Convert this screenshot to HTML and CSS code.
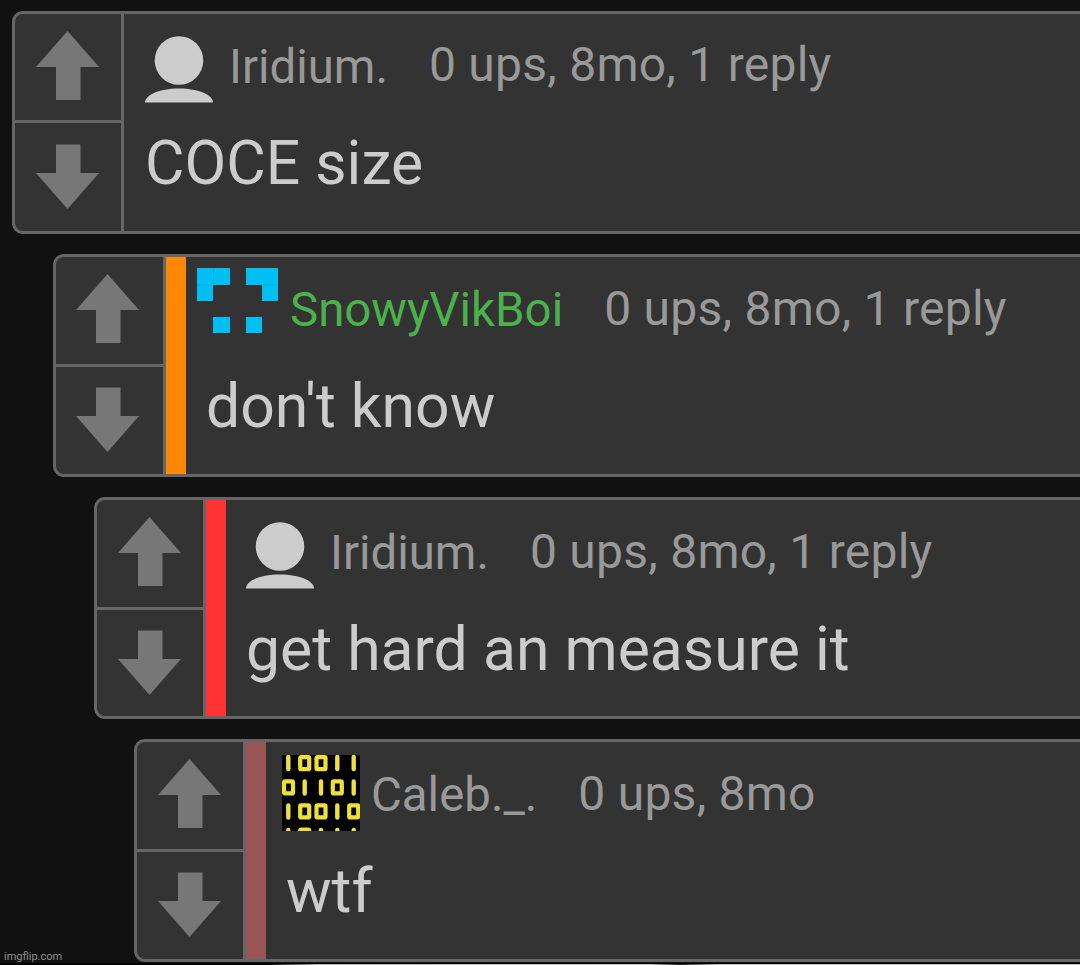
FILE: index.html
```html
<!DOCTYPE html>
<html lang="en">
<head>
    <meta charset="UTF-8">
    <meta name="viewport" content="width=device-width, initial-scale=1.0">
    <title>Comments</title>
    <link rel="stylesheet" href="styles.css">
</head>
<body>
    <!-- shared icons -->
    <svg class="defs" width="0" height="0">
        <symbol id="up" viewBox="0 0 64 69"><path d="M31.5 0L63 36H44.5V69H20V36H0Z"/></symbol>
        <symbol id="down" viewBox="0 0 64 65"><path d="M20 0.5H44.5V29H63L31.5 65L0 29H20Z"/></symbol>
        <symbol id="person" viewBox="0 0 68 67"><circle cx="34" cy="24.5" r="24.3"/><path d="M0 66.5C0 59 14 52.5 34 52.5S68 59 68 66.5Z"/></symbol>
    </svg>

    <div class="thread">
        <div class="comment">
            <div class="votes">
                <div class="vote"><svg class="arrow-up"><use href="#up"/></svg></div>
                <div class="vote"><svg class="arrow-down"><use href="#down"/></svg></div>
            </div>
            <div class="content">
                <div class="head">
                    <svg class="avatar person"><use href="#person"/></svg>
                    <span class="name">Iridium.</span>
                    <span class="meta">0 ups, 8mo, 1 reply</span>
                </div>
                <div class="text">COCE size</div>
            </div>
        </div>

        <div class="comment reply level-1">
            <div class="votes">
                <div class="vote"><svg class="arrow-up"><use href="#up"/></svg></div>
                <div class="vote"><svg class="arrow-down"><use href="#down"/></svg></div>
            </div>
            <div class="stripe orange"></div>
            <div class="content">
                <div class="head">
                    <svg class="avatar pixels" viewBox="0 0 81 66">
                        <path d="M0 0H33V17H16V33H0ZM49 0H81V33H65V17H49ZM16 49H33V65H16ZM49 49H65V65H49Z"/>
                        <path class="seam" d="M16.5 0V17M0 17H16M65 17H81"/>
                    </svg>
                    <span class="name green">SnowyVikBoi</span>
                    <span class="meta">0 ups, 8mo, 1 reply</span>
                </div>
                <div class="text">don't know</div>
            </div>
        </div>

        <div class="comment reply level-2">
            <div class="votes">
                <div class="vote"><svg class="arrow-up"><use href="#up"/></svg></div>
                <div class="vote"><svg class="arrow-down"><use href="#down"/></svg></div>
            </div>
            <div class="stripe red"></div>
            <div class="content">
                <div class="head">
                    <svg class="avatar person"><use href="#person"/></svg>
                    <span class="name">Iridium.</span>
                    <span class="meta">0 ups, 8mo, 1 reply</span>
                </div>
                <div class="text">get hard an measure it</div>
            </div>
        </div>

        <div class="comment reply level-3">
            <div class="votes">
                <div class="vote"><svg class="arrow-up"><use href="#up"/></svg></div>
                <div class="vote"><svg class="arrow-down"><use href="#down"/></svg></div>
            </div>
            <div class="stripe rose"></div>
            <div class="content">
                <div class="head">
                    <svg class="avatar binary" viewBox="0 0 78 76">
                        <rect width="78" height="76"/>
                        <path class="one" d="M6.3 2V14M55.3 2V14M71.7 2V14M22.7 26.5V38.5M39 26.5V38.5M71.7 26.5V38.5M6.3 50.5V62.5M55.3 50.5V62.5M6.3 75V79M39 75V79M55.3 75V79M71.7 75V79"/>
                        <g class="zero">
                            <rect x="18.2" y="2.2" width="9" height="12" rx="1"/>
                            <rect x="34.5" y="2.2" width="9" height="12" rx="1"/>
                            <rect x="2" y="26.4" width="9" height="12" rx="1"/>
                            <rect x="50.8" y="26.4" width="9" height="12" rx="1"/>
                            <rect x="18.2" y="50.4" width="9" height="12" rx="1"/>
                            <rect x="34.5" y="50.4" width="9" height="12" rx="1"/>
                            <rect x="67.2" y="50.4" width="9" height="12" rx="1"/>
                            <rect x="18.2" y="74.5" width="9" height="12" rx="1"/>
                        </g>
                    </svg>
                    <span class="name">Caleb._.</span>
                    <span class="meta">0 ups, 8mo</span>
                </div>
                <div class="text">wtf</div>
            </div>
        </div>
    </div>

    <div class="footer"></div>
    <div class="watermark">imgflip.com</div>
</body>
</html>
```
FILE: styles.css
```css
* {
    box-sizing: border-box;
}

body {
    margin: 0;
    height: 965px;
    overflow: hidden;
    background-color: #111;
    font-family: Roboto, sans-serif;
    color: #ccc;
    position: relative;
}

.defs {
    position: absolute;
}

.thread {
    display: flex;
    flex-direction: column;
    gap: 20px;
    padding: 11px 0 1px 12px;
}

.comment {
    display: flex;
    height: 223px;
    background-color: #333;
    border: 3px solid #666;
    border-right: none;
    border-radius: 11px 0 0 11px;
}

.level-1 {
    margin-left: 41px;
}

.level-2 {
    margin-left: 82px;
    height: 222px;
}

.level-3 {
    margin-left: 122px;
}

.votes {
    display: flex;
    flex-direction: column;
    width: 109px;
    border-right: 3px solid #666;
}

.vote {
    flex: none;
    height: 109px;
    padding: 17px 0 0 21px;
}

.vote:first-child {
    border-bottom: 3px solid #666;
}

.vote:last-child {
    height: 107px;
    padding-top: 21px;
}

.reply .vote:first-child {
    height: 110px;
}

.reply .vote:last-child {
    padding-top: 20px;
}

.level-1 .votes {
    width: 110px;
}

.level-1 .vote {
    padding-left: 20px;
}

.vote svg {
    display: block;
    width: 64px;
    fill: #777;
}

.arrow-up {
    height: 69px;
}

.arrow-down {
    height: 65px;
}

.stripe {
    width: 20px;
}

.orange {
    background-color: #ff8800;
}

.red {
    background-color: #ff3333;
}

.rose {
    background-color: #995555;
}

.content {
    padding-left: 21px;
}

.reply .content {
    padding-left: 20px;
}

.head {
    display: flex;
    height: 107px;
    font-size: 48px;
    line-height: 56px;
    white-space: nowrap;
    color: #999;
}

.avatar {
    flex: none;
}

.person {
    width: 68px;
    height: 67px;
    margin: 22px 16px 0 0;
    fill: #ccc;
}

.pixels {
    width: 81px;
    height: 66px;
    margin: 11px 12px 0 -9px;
    fill: #00bff3;
}

.seam {
    stroke: #08a5d4;
    stroke-width: 0.6;
}

.binary {
    width: 78px;
    height: 76px;
    margin: 13px 11px 0 -4px;
}

.one {
    stroke: #eee044;
    stroke-width: 4.4;
    stroke-linecap: round;
}

.zero {
    fill: none;
    stroke: #eee034;
    stroke-width: 4.2;
}

.name {
    padding-top: 25px;
    margin-right: 41px;
    font-size: 47.4px;
}

.green {
    color: #4bb14b;
}

.meta {
    padding-top: 23px;
    letter-spacing: 0.26px;
}

.reply .meta {
    padding-top: 24px;
}

.text {
    font-size: 60.7px;
    line-height: 86px;
    white-space: nowrap;
}

.footer {
    position: absolute;
    left: 0;
    right: 0;
    bottom: 0;
    height: 2px;
    background: linear-gradient(#000 50%, transparent 50%), linear-gradient(90deg, #000 265px, #bbb 320px, #ccc 650px, #222 680px, #ccc 720px, #ccc);
}

.watermark {
    position: absolute;
    left: 4px;
    bottom: 2px;
    font-size: 11px;
    line-height: 13px;
    color: #909090;
}
```
